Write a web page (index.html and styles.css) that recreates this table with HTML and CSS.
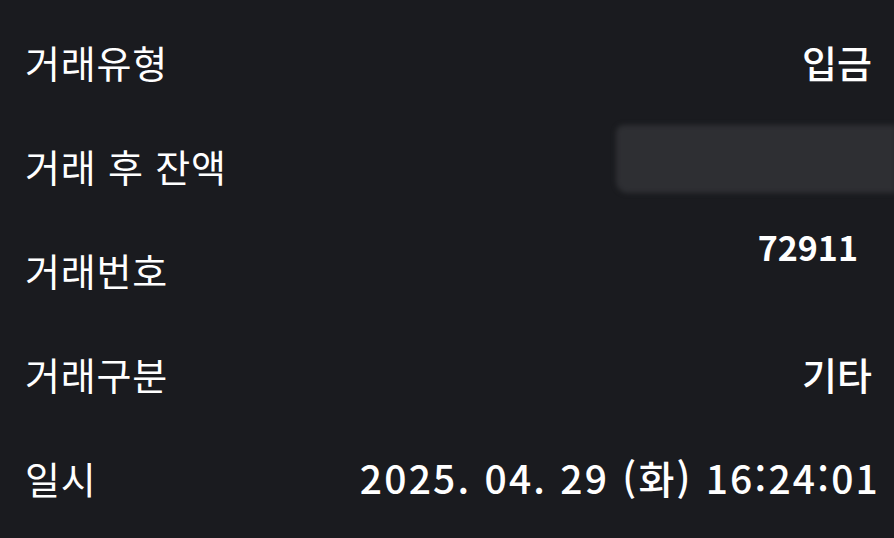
FILE: index.html
```html
<!DOCTYPE html>
<html lang="ko">
<head>
<meta charset="utf-8">
<link rel="stylesheet" href="styles.css">
</head>
<body>
<div class="list">
  <div class="row"><span class="label">거래유형</span><span class="value">입금</span></div>
  <div class="row"><span class="label">거래 후 잔액</span><span class="masked"></span></div>
  <div class="row"><span class="label">거래번호</span><span class="value value-raised">72911</span></div>
  <div class="row"><span class="label">거래구분</span><span class="value">기타</span></div>
  <div class="row"><span class="label">일시</span><span class="value value-wide">2025. 04. 29 (화) 16:24:01</span></div>
</div>
</body>
</html>
```

FILE: styles.css
```css
html, body {
  margin: 0;
  padding: 0;
  background: #1a1b1f;
  overflow: hidden;
}
body {
  width: 894px;
  height: 538px;
  font-family: "Noto Sans CJK KR", "Noto Sans", sans-serif;
  color: #ffffff;
}
.list {
  display: flex;
  flex-direction: column;
  padding: 9px 22px 0 25px;
}
.row {
  display: flex;
  align-items: center;
  justify-content: space-between;
  height: 104px;
}
.label {
  font-size: 38px;
  font-weight: 400;
  letter-spacing: 0.8px;
}
.value {
  font-size: 38px;
  font-weight: 500;
}
.value-raised {
  font-size: 34px;
  font-weight: 700;
  margin-right: 14px;
  padding-bottom: 46px;
}
.value-wide {
  font-size: 39px;
  margin-right: -8px;
  letter-spacing: 2.2px;
}
.masked {
  width: 280px;
  height: 68px;
  margin-right: -24px;
  margin-bottom: 12px;
  background: #2e2f33;
  border-radius: 8px 0 0 12px;
  filter: blur(2.5px);
}
```
